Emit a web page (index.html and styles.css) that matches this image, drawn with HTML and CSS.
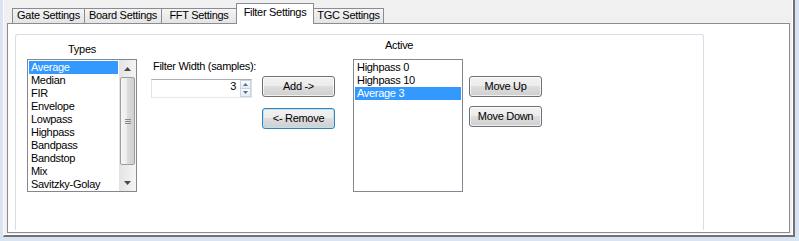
FILE: index.html
```html
<!DOCTYPE html>
<html lang="en">
<head>
    <meta charset="UTF-8">
    <title>Filter Settings</title>
    <link rel="stylesheet" href="styles.css">
</head>
<body>
    <div class="screen">
        <div class="well">
            <div class="tabs">
                <div class="tab tab-gate">Gate Settings</div>
                <div class="tab tab-board">Board Settings</div>
                <div class="tab tab-fft">FFT Settings</div>
                <div class="tab tab-filter on">Filter Settings</div>
                <div class="tab tab-tgc">TGC Settings</div>
            </div>

            <div class="page">
                <div class="group">
                    <div class="col col-types">
                        <div class="caption caption-center">Types</div>
                        <div class="listbox">
                            <div class="items">
                                <div class="item sel">Average</div>
                                <div class="item">Median</div>
                                <div class="item">FIR</div>
                                <div class="item">Envelope</div>
                                <div class="item">Lowpass</div>
                                <div class="item">Highpass</div>
                                <div class="item">Bandpass</div>
                                <div class="item">Bandstop</div>
                                <div class="item">Mix</div>
                                <div class="item">Savitzky-Golay</div>
                            </div>
                            <div class="vscroll">
                                <div class="sb-btn">
                                    <svg width="7" height="4" viewBox="0 0 7 4"><polygon points="0,4 7,4 3.5,0" fill="#4a4a4a"/></svg>
                                </div>
                                <div class="sb-thumb">
                                    <svg width="6" height="5" viewBox="0 0 6 5"><path d="M0 0.5H6M0 2.5H6M0 4.5H6" stroke="#8a8a8a" stroke-width="1"/></svg>
                                </div>
                                <div class="sb-track"></div>
                                <div class="sb-btn">
                                    <svg width="7" height="4" viewBox="0 0 7 4"><polygon points="0,0 7,0 3.5,4" fill="#4a4a4a"/></svg>
                                </div>
                            </div>
                        </div>
                    </div>

                    <div class="col col-width">
                        <div class="caption caption-width">Filter Width (samples):</div>
                        <div class="spin">
                            <div class="spin-value">3</div>
                            <div class="spin-btns">
                                <div class="spin-btn">
                                    <svg width="5" height="3" viewBox="0 0 5 3"><polygon points="0,3 5,3 2.5,0" fill="#4f6f96"/></svg>
                                </div>
                                <div class="spin-btn">
                                    <svg width="5" height="3" viewBox="0 0 5 3"><polygon points="0,0 5,0 2.5,3" fill="#4f6f96"/></svg>
                                </div>
                            </div>
                        </div>
                    </div>

                    <div class="col col-add">
                        <button type="button" class="btn">Add -&gt;</button>
                        <button type="button" class="btn btn-focus btn-remove">&lt;- Remove</button>
                    </div>

                    <div class="col col-active">
                        <div class="caption caption-active">Active</div>
                        <div class="listbox">
                            <div class="items">
                                <div class="item">Highpass 0</div>
                                <div class="item">Highpass 10</div>
                                <div class="item sel">Average 3</div>
                            </div>
                        </div>
                    </div>

                    <div class="col col-move">
                        <button type="button" class="btn">Move Up</button>
                        <button type="button" class="btn btn-down">Move Down</button>
                    </div>
                </div>
            </div>
        </div>
    </div>
</body>
</html>
```

FILE: styles.css
```css
* {
    box-sizing: border-box;
}

body {
    margin: 0;
    background-color: #d8e4f2;
    font-family: "Liberation Sans", Arial, sans-serif;
    font-size: 11px;
    letter-spacing: -0.3px;
    color: #000;
}

.screen {
    width: 799px;
    height: 241px;
    overflow: hidden;
}

.well {
    width: 792px;
    height: 237px;
    margin-left: 3px;
    padding-left: 3px;
    background-color: #f0f0f0;
    border-left: 1px solid #fbfbfb;
    border-right: 2px solid #727272;
    border-bottom: 2px solid #727272;
    box-shadow: inset -1px -1px 0 #ffffff;
}

/* tab strip */
.tabs {
    display: flex;
    align-items: flex-end;
    height: 23px;
    padding-left: 5px;
}

.tab {
    height: 15px;
    margin-right: -1px;
    border: 1px solid #898c95;
    border-bottom: none;
    background: linear-gradient(#f4f4f4, #e4e4e4);
    text-align: center;
    line-height: 13px;
    white-space: nowrap;
}

.tab.on {
    position: relative;
    z-index: 1;
    height: 21px;
    margin-bottom: -1px;
    padding-top: 2px;
    background: #ffffff;
}

.tab-gate { width: 73px; }
.tab-board { width: 78px; }
.tab-fft { width: 76px; }
.tab-filter { width: 78px; }
.tab-tgc { width: 71px; }

/* tab page */
.page {
    width: 783px;
    height: 210px;
    padding: 10px 0 0 7px;
    background-color: #ffffff;
    border: 1px solid #898c95;
}

.group {
    display: flex;
    align-items: flex-start;
    width: 689px;
    height: 196px;
    border: 1px solid #d5dfe5;
    border-bottom: none;
    border-radius: 3px 3px 0 0;
}

.col {
    display: flex;
    flex-direction: column;
}

.col-types { width: 110px; margin-left: 11px; padding-top: 8px; }
.col-width { width: 101px; margin-left: 14px; padding-top: 25px; }
.col-add { width: 73px; margin-left: 10px; padding-top: 41px; }
.col-active { width: 110px; margin-left: 18px; padding-top: 4px; }
.col-move { width: 73px; margin-left: 6px; padding-top: 41px; }

.caption {
    height: 13px;
    line-height: 13px;
    white-space: nowrap;
}

.caption-center { text-align: center; }
.caption-width { padding-left: 2px; }
.caption-active { padding-left: 32px; }

/* list boxes */
.listbox {
    display: flex;
    height: 133px;
    margin-top: 3px;
    background-color: #ffffff;
    border: 1px solid #828790;
}

.col-active .listbox {
    margin-top: 7px;
}

.items {
    flex: 1;
    padding: 1px;
    overflow: hidden;
}

.item {
    height: 13px;
    line-height: 13px;
    padding-left: 2px;
    white-space: nowrap;
}

.item.sel {
    background-color: #3399ff;
    color: #ffffff;
}

.vscroll {
    display: flex;
    flex-direction: column;
    width: 17px;
    background: linear-gradient(to right, #e3e3e3, #f5f5f5);
}

.sb-btn {
    display: flex;
    align-items: center;
    justify-content: center;
    height: 17px;
}

.sb-thumb {
    display: flex;
    align-items: center;
    justify-content: center;
    height: 88px;
    margin: 0 1px;
    border: 1px solid #9d9d9d;
    border-radius: 2px;
    background: linear-gradient(to right, #f6f6f6, #ebebeb 50%, #dcdcdc 50%, #d0d0d0);
}

.sb-track {
    flex: 1;
}

/* numeric up down */
.spin {
    display: flex;
    height: 19px;
    margin-top: 6px;
    background-color: #ffffff;
    border: 1px solid;
    border-color: #abadb3 #dbdfe6 #e3e9ef #e2e3ea;
}

.spin-value {
    flex: 1;
    padding-right: 4px;
    text-align: right;
    line-height: 13px;
}

.spin-btns {
    display: flex;
    flex-direction: column;
    width: 11px;
}

.spin-btn {
    flex: 1;
    display: flex;
    align-items: center;
    justify-content: center;
    border: 1px solid #c6d3e0;
    background: linear-gradient(#fbfcfd, #e4ebf3);
}

.spin-btn + .spin-btn {
    border-top: none;
}

/* buttons */
.btn {
    display: flex;
    align-items: center;
    justify-content: center;
    width: 100%;
    height: 21px;
    padding: 0;
    font: inherit;
    letter-spacing: inherit;
    line-height: 13px;
    color: #000;
    border: 1px solid #707070;
    border-radius: 3px;
    background: linear-gradient(#f2f2f2 0%, #ebebeb 50%, #dddddd 50%, #cfcfcf 100%);
    box-shadow: inset 0 0 0 1px rgba(255, 255, 255, 0.7);
}

.btn-focus {
    border-color: #3c7fb1;
    box-shadow: inset 0 0 0 1px #b4e4f8;
}

.btn-remove { margin-top: 11px; }
.btn-down { margin-top: 9px; }
```
